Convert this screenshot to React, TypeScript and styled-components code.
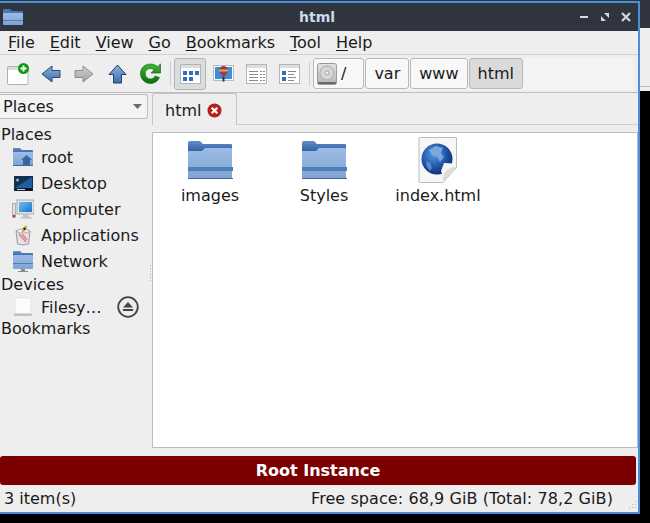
import React from 'react';
import styled, { createGlobalStyle } from 'styled-components';

const GlobalStyle = createGlobalStyle`
  html, body {
    margin: 0;
    padding: 0;
    height: 523px;
    overflow: hidden;
    background: linear-gradient(#2f343f 0 28px, #eeeeee 28px 86px, #b8b8b8 86px 87px, #eeeeee 87px 91px, #000 91px);
    font-family: "DejaVu Sans", sans-serif;
    font-size: 16px;
    color: #1a1a1a;
  }
`;

const Window = styled.div`
  box-sizing: border-box;
  width: 640px;
  height: 513px;
  margin-top: 1px;
  border: solid #4a90d9;
  border-width: 2px 2px 2px 0;
  background: #eeeeee;
  display: flex;
  flex-direction: column;
`;

const TitleBar = styled.div`
  height: 28px;
  flex: none;
  background: #2f343f;
  display: grid;
  grid-template-columns: 1fr auto 1fr;
  align-items: center;
  padding: 0 7px 0 3px;
`;

const TitleText = styled.div`
  color: #cfdae7;
  font-size: 14px;
  font-weight: bold;
`;

const WindowButtons = styled.div`
  justify-self: end;
  display: flex;
  gap: 11px;
  align-items: center;
`;

const MenuBar = styled.div`
  height: 23px;
  flex: none;
  display: flex;
  align-items: center;
  gap: 15px;
  padding: 0 8px;
  border-bottom: 1px solid #d4d4d4;
`;

const MenuItem = styled.span`
  letter-spacing: -0.02px;
  & u { text-underline-offset: 2px; }
`;

const ToolBar = styled.div`
  height: 37px;
  flex: none;
  display: flex;
  align-items: center;
  padding: 0 5px 0 2px;
  border-bottom: 1px solid #bdbdbd;
`;

const ToolIcon = styled.div<{ $active?: boolean }>`
  box-sizing: border-box;
  width: 32px;
  height: 32px;
  margin-right: 1px;
  display: flex;
  align-items: center;
  justify-content: center;
  border-radius: 3px;
  background: ${p => (p.$active ? '#dcdcdc' : 'transparent')};
  border: 1px solid ${p => (p.$active ? '#b5b5b5' : 'transparent')};
`;

const Separator = styled.div`
  width: 1px;
  height: 24px;
  margin: 0 3px;
  flex: none;
  background: #cfcfcf;
`;

const PathBar = styled.div`
  flex: 1;
  display: flex;
  align-items: center;
  height: 32px;
  gap: 1px;
  background: #f3f3f3;
`;

const Crumb = styled.div<{ $current?: boolean; $root?: boolean }>`
  box-sizing: border-box;
  height: 31px;
  display: flex;
  align-items: center;
  gap: 4px;
  padding: 0 ${p => (p.$root ? '17px 0 3px' : '8px')};
  border: 1px solid #b8b8b8;
  border-radius: 3px;
  background: ${p => (p.$current ? '#dadada' : '#f8f8f8')};
`;

const Main = styled.div`
  flex: 1;
  min-height: 0;
  display: flex;
`;

const SidePane = styled.div`
  width: 148px;
  flex: none;
  padding-top: 1px;
`;

const Sash = styled.div`
  width: 4px;
  flex: none;
  display: flex;
  align-items: center;
  justify-content: center;
`;

const SashDots = styled.div`
  width: 1px;
  height: 16px;
  margin-top: 4px;
  background: repeating-linear-gradient(#b4b4b4 0 1px, transparent 1px 3px);
`;

const Combo = styled.div`
  box-sizing: border-box;
  height: 25px;
  display: flex;
  align-items: center;
  justify-content: space-between;
  padding: 0 5px 0 3px;
  border: 1px solid #bdbdbd;
  border-left: 0;
  border-radius: 0 3px 3px 0;
  background: #f3f3f3;
`;

const PlacesList = styled.div`
  margin-top: 5px;
`;

const Heading = styled.div`
  height: 20px;
  line-height: 22px;
  padding-left: 1px;
`;

const PlaceRow = styled.div`
  height: 26px;
  display: flex;
  align-items: center;
  padding-left: 11px;
  gap: 6px;
`;

const DeviceRow = styled(PlaceRow)`
  margin-bottom: -2px;
  justify-content: space-between;
  padding-right: 9px;
`;

const PlaceIcon = styled.div`
  width: 24px;
  height: 23px;
  display: flex;
  align-items: center;
  justify-content: center;
  flex: none;
`;

const DeviceName = styled.div`
  display: flex;
  align-items: center;
  gap: 6px;
`;

const ContentPane = styled.div`
  flex: 1;
  min-width: 0;
  display: flex;
  flex-direction: column;
  padding-top: 1px;
`;

const TabStrip = styled.div`
  height: 31px;
  flex: none;
  box-sizing: border-box;
  border-bottom: 1px solid #cfcfcf;
  display: flex;
  align-items: flex-end;
`;

const Tab = styled.div`
  box-sizing: border-box;
  height: 32px;
  margin-bottom: -1px;
  padding: 2px 14px 0 12px;
  display: flex;
  align-items: center;
  gap: 6px;
  background: #eeeeee;
  border: 1px solid #c4c4c4;
  border-bottom: 0;
  border-radius: 3px 3px 0 0;
`;

const FileView = styled.div`
  flex: 1;
  min-height: 0;
  margin-top: 7px;
  background: #fff;
  border: 1px solid #bdbdbd;
  display: flex;
  align-items: flex-start;
  padding: 4px 0 0 0;
`;

const FileItem = styled.div`
  width: 114px;
  display: flex;
  flex-direction: column;
  align-items: center;
  gap: 3px;
`;

const FileIconBox = styled.div`
  height: 46px;
  display: flex;
  align-items: center;
  justify-content: center;
`;

const RootBanner = styled.div`
  height: 29px;
  flex: none;
  margin: 8px 2px 0 0;
  border-radius: 3px;
  background: #7c0000;
  color: #fff;
  font-weight: bold;
  display: flex;
  align-items: center;
  justify-content: center;
`;

const StatusBar = styled.div`
  position: relative;
  height: 27px;
  flex: none;
  display: flex;
  align-items: center;
  justify-content: space-between;
  padding: 0 25px 0 4px;
`;

const FreeSpace = styled.span`
  letter-spacing: 0.08px;
`;

const ResizeGrip = styled.svg`
  position: absolute;
  right: 1px;
  bottom: 1px;
`;

const Defs = () => (
  <svg width="0" height="0" style={{ display: 'block', height: 0 }}>
    <defs>
      <linearGradient id="folderFront" x1="0" y1="0" x2="0" y2="1">
        <stop offset="0" stopColor="#9dbce4" />
        <stop offset="1" stopColor="#7ea3d3" />
      </linearGradient>
      <linearGradient id="folderBack" x1="0" y1="0" x2="0" y2="1">
        <stop offset="0" stopColor="#5f8fca" />
        <stop offset="1" stopColor="#315f9e" />
      </linearGradient>
      <linearGradient id="arrowBlue" x1="0" y1="0" x2="0" y2="1">
        <stop offset="0" stopColor="#8fb1dc" />
        <stop offset="1" stopColor="#3f6dab" />
      </linearGradient>
      <linearGradient id="arrowGrey" x1="0" y1="0" x2="0" y2="1">
        <stop offset="0" stopColor="#d2d2d2" />
        <stop offset="1" stopColor="#a0a0a0" />
      </linearGradient>
      <linearGradient id="reloadGreen" x1="0" y1="0" x2="0" y2="1">
        <stop offset="0" stopColor="#3fb52e" />
        <stop offset="1" stopColor="#0b6e0e" />
      </linearGradient>
      <linearGradient id="driveGrey" x1="0" y1="0" x2="0" y2="1">
        <stop offset="0" stopColor="#e4e4e4" />
        <stop offset="1" stopColor="#b5b5b5" />
      </linearGradient>
      <radialGradient id="globeBlue" cx=".4" cy=".35" r=".7">
        <stop offset="0" stopColor="#5c9ae0" />
        <stop offset=".6" stopColor="#1d52a8" />
        <stop offset="1" stopColor="#0c2c6e" />
      </radialGradient>
      <linearGradient id="screenBlue" x1="0" y1="0" x2="1" y2="1">
        <stop offset="0" stopColor="#6cc0f2" />
        <stop offset="1" stopColor="#1f73c4" />
      </linearGradient>
    </defs>
  </svg>
);

const FolderMini = () => (
  <svg width="20" height="16" viewBox="0 0 20 16">
    <path d="M0 1q0-1 1-1h6l2 2h10a1 1 0 0 1 1 1v3H0z" fill="#4677b6" />
    <rect x="0" y="4" width="20" height="12" rx="1" fill="url(#folderFront)" />
    <rect x="0" y="11" width="20" height="1" fill="#4f7fb9" />
  </svg>
);

const BigFolder = () => (
  <svg width="46" height="40" viewBox="0 0 46 40">
    <path d="M1 3a2 2 0 0 1 2-2h10l3 3h28a1 1 0 0 1 1 1v7H1z" fill="url(#folderBack)" />
    <path d="M1 12q0-1 1-1h13l3-3h26a1 1 0 0 1 1 1v29a1 1 0 0 1-1 1H2a1 1 0 0 1-1-1z" fill="url(#folderFront)" />
    <rect x="1" y="27" width="45" height="4" fill="#4f7fb9" />
    <rect x="1" y="38" width="45" height="1" fill="#44688f" />
  </svg>
);

const Globe = () => (
  <svg width="40" height="46" viewBox="0 0 40 46">
    <path d="M1 .5h37.500v30L25 45.500H1z" fill="#f6f6f6" stroke="#bcbcbc" />
    <path d="M38 30c-5 1-13 1-13 15z" fill="#d8d8d8" />
    <circle cx="19" cy="22" r="15.500" fill="url(#globeBlue)" />
    <path d="M11 13l7-4 7 2-2 5 3 4-4 5-3-5-5-2z" fill="#86aedc" opacity=".85" />
    <path d="M8 24l4 2 2 5-2 3-3-4z" fill="#86aedc" opacity=".6" />
    <path d="M36 26.500L26 26l-3 8 2 6 4 1z" fill="#f6f6f6" />
    <path d="M38 30c-5 1-13 1-13 15z" fill="#dcdcdc" />
  </svg>
);

const ToolNew = () => (
  <svg width="23" height="22" viewBox="0 0 23 22">
    <rect x=".5" y="3.500" width="20.500" height="18" rx="1" fill="#fff" stroke="#b0b0b0" />
    <rect x="1" y="4" width="19.500" height="3" fill="#dcdcdc" />
    <circle cx="16.500" cy="5.500" r="5.500" fill="#0a9a14" />
    <path d="M16.500 2.500v6M13.500 5.500h6" stroke="#fff" strokeWidth="2" />
  </svg>
);

const ArrowLeft = ({ fill, stroke }: { fill: string; stroke: string }) => (
  <svg width="20" height="20" viewBox="0 0 20 20">
    <path d="M1 10l10-8v4.500h8v7h-8V18z" fill={fill} stroke={stroke} strokeLinejoin="round" />
  </svg>
);

const ArrowRight = ({ fill, stroke }: { fill: string; stroke: string }) => (
  <svg width="20" height="20" viewBox="0 0 20 20">
    <path d="M19 10L9 2v4.500H1v7h8V18z" fill={fill} stroke={stroke} strokeLinejoin="round" />
  </svg>
);

const ArrowUp = () => (
  <svg width="19" height="20" viewBox="0 0 19 20">
    <path d="M9.500 1l8.500 9.500h-4.500V19h-8v-8.500H1z" fill="url(#arrowBlue)" stroke="#1d3f73" strokeLinejoin="round" />
  </svg>
);

const Reload = () => (
  <svg width="21" height="21" viewBox="0 0 21 21">
    <path d="M10.500 1C4.800 1 .5 5 .5 10.500S4.800 20.500 10.500 20.500c4 0 7.500-2.500 9-6l-4.500-1.500c-.8 1.900-2.500 3-4.500 3-3 0-5.300-2.300-5.300-5.500S7.500 5.500 10.500 5.500c1.500 0 2.600.5 3.500 1.400L11 10h9.500V.8L17.500 3.800C15.700 2 13.300 1 10.500 1z" fill="url(#reloadGreen)" stroke="#0a5c0c" strokeWidth=".6" />
  </svg>
);

const ViewFrame = ({ children }: { children: React.ReactNode }) => (
  <svg width="21" height="20" viewBox="0 0 21 20">
    <rect x=".5" y=".5" width="20" height="19" fill="#fff" stroke="#b5b5b5" />
    <rect x="1" y="1" width="19" height="3" fill="#dddddd" />
    {children}
  </svg>
);

const IconGridGlyph = () => (
  <ViewFrame>
    {[3, 9, 15].map(x => <rect key={x} x={x} y="7" width="4" height="4" fill="#2f6fc0" />)}
    {[3, 9].map(x => <rect key={x} x={x} y="13" width="4" height="4" fill="#2f6fc0" />)}
  </ViewFrame>
);

const DetailGlyph = () => (
  <ViewFrame>
    {[7, 10, 13, 16].map(y => <path key={y} d={`M3 ${y + 0.5}h9M14 ${y + 0.5}h2M17 ${y + 0.5}h2`} stroke="#8a8a8a" />)}
  </ViewFrame>
);

const CompactGlyph = () => (
  <ViewFrame>
    <rect x="3" y="7" width="4" height="4" fill="#2f6fc0" />
    <rect x="3" y="13" width="4" height="4" fill="#2f6fc0" />
    <path d="M9 7.500h8M9 10.500h6M9 13.500h8M9 16.500h6" stroke="#8a8a8a" />
  </ViewFrame>
);

const ThumbGlyph = () => (
  <svg width="21" height="18" viewBox="0 0 21 18">
    <rect x=".5" y=".5" width="20" height="15" fill="#fff" stroke="#bbb" />
    <rect x="2" y="2" width="17" height="12" fill="#3d8fd8" />
    <path d="M6 5.500a4.500 4.500 0 0 1 9 0c0 3-3 5-4 6-1-1-5-3-5-6z" fill="#a6345f" />
    <path d="M6 5.500h9" stroke="#d8b030" strokeWidth="2" />
    <rect x="9.500" y="11.500" width="2" height="5" fill="#4a2c1a" />
  </svg>
);

const DriveIcon = () => (
  <svg width="20" height="24" viewBox="0 0 20 24">
    <rect x=".5" y="1.500" width="19" height="21" rx="2" fill="url(#driveGrey)" stroke="#9a9a9a" />
    <circle cx="10" cy="11" r="7" fill="#d6d6d6" stroke="#a8a8a8" />
    <circle cx="10" cy="11" r="2" fill="#eeeeee" stroke="#a8a8a8" />
    <rect x="1" y="20" width="18" height="2" fill="#6a6a6a" />
  </svg>
);

const CloseBadge = () => (
  <svg width="15" height="15" viewBox="0 0 16 16">
    <circle cx="8" cy="8" r="7.500" fill="#b8201c" />
    <path d="M5 5l6 6M11 5l-6 6" stroke="#fff" strokeWidth="2.400" />
  </svg>
);

const Eject = () => (
  <svg width="22" height="22" viewBox="0 0 22 22">
    <circle cx="11" cy="11" r="9.800" fill="#ececec" stroke="#444" strokeWidth="1.800" />
    <path d="M11 6l5 5.500H6z" fill="#444" />
    <rect x="6" y="13" width="10" height="2" fill="#444" />
  </svg>
);

const SmallChevron = () => (
  <svg width="9" height="5" viewBox="0 0 9 5"><path d="M0 0h9L4.500 5z" fill="#6a6a6a" /></svg>
);

const Home = () => (
  <svg width="22" height="20" viewBox="0 0 22 20">
    <path d="M1 2q0-1 1-1h6l2 2h10q1 0 1 1v3H1z" fill="url(#folderBack)" />
    <rect x="1" y="5" width="20" height="14" rx="1" fill="url(#folderFront)" />
    <path d="M9 13l5.500-5 5.500 5h-2v5h-7v-5z" fill="#3566a5" />
    <rect x="1" y="18" width="20" height="1" fill="#44688f" />
  </svg>
);

const DesktopGlyph = () => (
  <svg width="19" height="15" viewBox="0 0 19 15">
    <rect width="19" height="15" fill="#14304f" />
    <path d="M1 12L18 1v11z" fill="#1f5f9e" />
    <circle cx="3.500" cy="4" r="1.500" fill="#7fb2e0" />
    <rect x="1" y="12.500" width="17" height="2" fill="#0b0b0b" />
    <rect x="3" y="13" width="8" height="1" fill="#c8d0d8" />
  </svg>
);

const ComputerGlyph = () => (
  <svg width="22" height="21" viewBox="0 0 22 21">
    <rect x=".5" y="4.500" width="3" height="14" fill="#e2e2e2" stroke="#9a9a9a" strokeWidth=".7" />
    <circle cx="2" cy="17" r="1.200" fill="#b03030" />
    <rect x="5" y="1" width="17" height="14" fill="#e6e6e6" stroke="#8f8f8f" strokeWidth=".7" />
    <rect x="7" y="3" width="13" height="10" fill="url(#screenBlue)" />
    <path d="M11 15h5l1 2.500 3 1v1H8v-1l3-1z" fill="#c4c4c4" />
  </svg>
);

const AppsGlyph = () => (
  <svg width="16" height="21" viewBox="0 0 16 21">
    <path d="M1 6q7-3 14 0l-1.500 13q-5.500 2-11 0z" fill="#e5dfe8" stroke="#8c8494" strokeWidth=".8" />
    <ellipse cx="8" cy="6" rx="6.500" ry="2" fill="#f4f0f6" stroke="#8c8494" strokeWidth=".6" />
    <path d="M4 9l7 8M7 9l5 6" stroke="#e0808c" strokeWidth="1.500" />
    <path d="M7.500 7l4-6" stroke="#d8b414" strokeWidth="2.400" />
    <path d="M9 4.500l1-1.500" stroke="#222" strokeWidth="2.400" />
  </svg>
);

const NetworkGlyph = () => (
  <svg width="22" height="22" viewBox="0 0 22 22">
    <path d="M1 2q0-1 1-1h6l2 2h10q1 0 1 1v3H1z" fill="url(#folderBack)" />
    <rect x="1" y="5" width="20" height="14" rx="1" fill="url(#folderFront)" />
    <rect x="1" y="13" width="20" height="1" fill="#4f7fb9" />
    <path d="M9 19h4v2H9zM6 21h10v1H6z" fill="#8a8a8a" />
  </svg>
);

const Disk = () => (
  <svg width="20" height="20" viewBox="0 0 20 20">
    <path d="M2 2q0-1 1-1h14q1 0 1 1v15H2z" fill="#fbfbfb" stroke="#dddddd" strokeWidth=".7" />
    <rect x="1" y="16.500" width="18" height="2.500" rx="1" fill="#c0c0c0" />
  </svg>
);

const App = () => (
  <>
    <GlobalStyle />
    <Defs />
    <Window>
      <TitleBar>
        <FolderMini />
        <TitleText>html</TitleText>
        <WindowButtons>
          <svg width="10" height="10" viewBox="0 0 10 10"><rect x="1" y="4" width="8" height="2" fill="#cfdae7" /></svg>
          <svg width="10" height="10" viewBox="0 0 10 10"><path d="M1 9V4l5 5zM9 1v5L4 1z" fill="#cfdae7" /></svg>
          <svg width="10" height="10" viewBox="0 0 10 10"><path d="M1 1l8 8M9 1L1 9" stroke="#cfdae7" strokeWidth="2.200" /></svg>
        </WindowButtons>
      </TitleBar>
      <MenuBar>
        {['File', 'Edit', 'View', 'Go', 'Bookmarks', 'Tool', 'Help'].map(m => (
          <MenuItem key={m}><u>{m[0]}</u>{m.slice(1)}</MenuItem>
        ))}
      </MenuBar>
      <ToolBar>
        <ToolIcon><ToolNew /></ToolIcon>
        <ToolIcon><ArrowLeft fill="url(#arrowBlue)" stroke="#24497f" /></ToolIcon>
        <ToolIcon><ArrowRight fill="url(#arrowGrey)" stroke="#8c8c8c" /></ToolIcon>
        <ToolIcon><ArrowUp /></ToolIcon>
        <ToolIcon><Reload /></ToolIcon>
        <Separator />
        <ToolIcon $active><IconGridGlyph /></ToolIcon>
        <ToolIcon><ThumbGlyph /></ToolIcon>
        <ToolIcon><DetailGlyph /></ToolIcon>
        <ToolIcon><CompactGlyph /></ToolIcon>
        <Separator />
        <PathBar>
          <Crumb $root><DriveIcon />/</Crumb>
          <Crumb>var</Crumb>
          <Crumb>www</Crumb>
          <Crumb $current>html</Crumb>
        </PathBar>
      </ToolBar>
      <Main>
        <SidePane>
          <Combo>Places<SmallChevron /></Combo>
          <PlacesList>
            <Heading>Places</Heading>
            <PlaceRow><PlaceIcon><Home /></PlaceIcon>root</PlaceRow>
            <PlaceRow><PlaceIcon><DesktopGlyph /></PlaceIcon>Desktop</PlaceRow>
            <PlaceRow><PlaceIcon><ComputerGlyph /></PlaceIcon>Computer</PlaceRow>
            <PlaceRow><PlaceIcon><AppsGlyph /></PlaceIcon>Applications</PlaceRow>
            <PlaceRow><PlaceIcon><NetworkGlyph /></PlaceIcon>Network</PlaceRow>
            <Heading>Devices</Heading>
            <DeviceRow>
              <DeviceName><PlaceIcon><Disk /></PlaceIcon>Filesy…</DeviceName>
              <Eject />
            </DeviceRow>
            <Heading>Bookmarks</Heading>
          </PlacesList>
        </SidePane>
        <Sash><SashDots /></Sash>
        <ContentPane>
          <TabStrip>
            <Tab>html<CloseBadge /></Tab>
          </TabStrip>
          <FileView>
            <FileItem><FileIconBox><BigFolder /></FileIconBox>images</FileItem>
            <FileItem><FileIconBox><BigFolder /></FileIconBox>Styles</FileItem>
            <FileItem><FileIconBox><Globe /></FileIconBox>index.html</FileItem>
          </FileView>
        </ContentPane>
      </Main>
      <RootBanner>Root Instance</RootBanner>
      <StatusBar>
        <span>3 item(s)</span>
        <FreeSpace>Free space: 68,9 GiB (Total: 78,2 GiB)</FreeSpace>
        <ResizeGrip width="10" height="10" viewBox="0 0 10 10">
          {[[8, 0], [5, 3], [8, 3], [2, 6], [5, 6], [8, 6]].map(([x, y]) => (
            <rect key={`${x}-${y}`} x={x} y={y} width="1" height="1" fill="#b4b4b4" />
          ))}
        </ResizeGrip>
      </StatusBar>
    </Window>
  </>
);

export default App;
